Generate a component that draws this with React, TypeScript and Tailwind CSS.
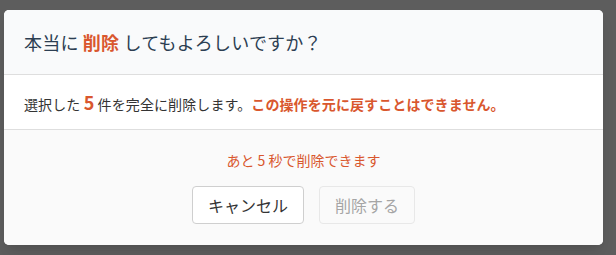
import React from 'react';

export default function App() {
  return (
    <div
      className="relative h-[255px] w-[616px] overflow-hidden bg-[#5d5d5d] pl-[4px] pt-[10px]"
      style={{ fontFamily: '"Noto Sans CJK JP", "Noto Sans", sans-serif' }}
    >
      {/* Dialog */}
      <div className="flex h-[235px] w-[599px] flex-col overflow-hidden rounded-[5px] bg-white shadow-lg">
        {/* Header */}
        <div className="flex h-[65px] items-center border-b border-[#dedede] bg-[#f9fafb] px-5">
          <h2 className="text-[18px] leading-none tracking-[0.2px] text-[#2c3e52]">
            本当に <span className="font-bold text-[#d9572e]">削除</span> してもよろしいですか？
          </h2>
        </div>

        {/* Body */}
        <div className="flex h-[55px] items-center border-b border-[#dedede] bg-white px-5">
          <p className="text-[14px] leading-none tracking-[0.1px] text-[#333]">
            選択した <span className="text-[18px] font-bold text-[#d9572e]">5</span> 件を完全に削除します。
            <span className="font-bold text-[#d9572e]">この操作を元に戻すことはできません。</span>
          </p>
        </div>

        {/* Footer */}
        <div className="flex flex-1 flex-col items-center bg-[#fafafa] pt-5">
          <p className="text-[14px] leading-5 text-[#d9572e]">あと 5 秒で削除できます</p>
          <div className="mt-4 flex gap-[15px]">
            <button className="h-[38px] w-[112px] rounded-[4px] border border-[#cfcfcf] bg-white text-[16px] text-[#333]">
              キャンセル
            </button>
            <button
              disabled
              className="h-[38px] w-[96px] rounded-[4px] border border-[#e8e8e8] bg-[#fafafa] text-[16px] text-[#a5a5a5]"
            >
              削除する
            </button>
          </div>
        </div>
      </div>
    </div>
  );
}
